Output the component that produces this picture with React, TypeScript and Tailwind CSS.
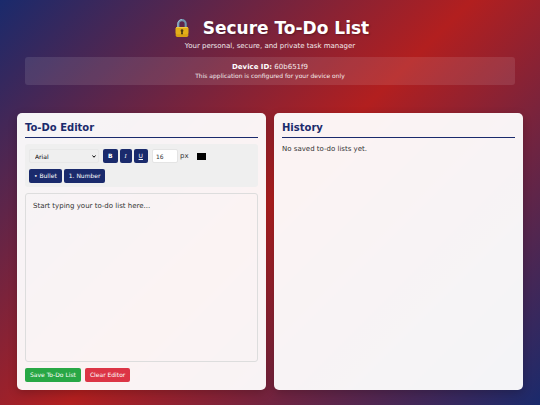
import { useState } from 'react';
import type { ReactNode } from 'react';
import clsx from 'clsx';

const fonts = ['Arial', 'Georgia', 'Verdana', 'Courier New'];

function LockIcon() {
  return (
    <svg viewBox="0 0 26 38" className="h-5 w-[14px]" aria-hidden="true">
      <path d="M6 19V11a7 7 0 0 1 14 0v8" fill="none" stroke="#6f94ad" strokeWidth="4" />
      <path d="M5 18V11a8 8 0 0 1 8-8" fill="none" stroke="#a9c9dc" strokeWidth="1.5" />
      <rect x="1" y="17" width="24" height="19" rx="3" fill="#d9a013" />
      <rect x="1" y="17" width="24" height="14" rx="3" fill="#e3ae1a" />
      <rect x="2" y="17" width="22" height="2" rx="1" fill="#f2cc40" />
      <circle cx="13" cy="24" r="2.6" fill="#4a3a12" />
      <path d="M11.8 25h2.4l.8 6h-4z" fill="#4a3a12" />
    </svg>
  );
}

function ToolButton({ label, className, children }: { label: string; className?: string; children: ReactNode }) {
  return (
    <button aria-label={label} className={clsx('h-[14px] rounded-[2px] bg-[#1a2a6c] px-[5px] text-[6px] leading-none text-white', className)}>
      {children}
    </button>
  );
}

function Panel({ title, children }: { title: string; children: ReactNode }) {
  return (
    <section className="flex min-w-0 flex-col rounded-[5px] bg-white/95 p-2 shadow-[0_3px_10px_rgba(0,0,0,0.2)]">
      <h2 className="mb-[6px] border-b border-[#1a2a6c] pt-px pb-[3px] text-[10px] leading-[12px] font-bold text-[#1a2a6c]">{title}</h2>
      {children}
    </section>
  );
}

export default function App() {
  const [text, setText] = useState('Start typing your to-do list here...');
  const [size, setSize] = useState('16');

  return (
    <div className="flex min-h-screen flex-col bg-[linear-gradient(135deg,#1a2a6c,#b21f1f,#1a2a6c)] px-[17px] pt-[17px] pb-[15px] font-['DejaVu_Sans',sans-serif] text-[7px] text-[#333]">
      <header className="mb-7 px-2 text-center text-white">
        <h1 className="flex items-center justify-center gap-[14px] pl-1 text-[17px] leading-[22px] font-bold [text-shadow:1px_1px_2px_rgba(0,0,0,0.3)]">
          <LockIcon />
          Secure To-Do List
        </h1>
        <p className="mt-[3px] text-[7px] leading-[9px] opacity-90">Your personal, secure, and private task manager</p>
        <div className="mt-[6px] rounded-[3px] bg-white/10 py-[6px]">
          <p className="text-[7px] leading-[9px]">
            <strong>Device ID:</strong> <span className="opacity-90">60b651f9</span>
          </p>
          <p className="text-[6px] leading-[7px] opacity-90">This application is configured for your device only</p>
        </div>
      </header>

      <main className="grid flex-1 grid-cols-2 gap-2">
        <Panel title="To-Do Editor">
          <div className="mb-[6px] flex flex-wrap items-center gap-x-[2px] gap-y-[6px] rounded-[3px] bg-[#efefef] px-1 pt-[5px] pb-1">
            <div className="relative mr-[2px]">
              <select aria-label="Font" className="block h-[14px] w-[70px] appearance-none rounded-[2px] border border-[#e8e8e8] bg-[#efefef] px-[5px] text-[6px] text-black">
                {fonts.map((font) => (
                  <option key={font}>{font}</option>
                ))}
              </select>
              <svg viewBox="0 0 8 6" className="pointer-events-none absolute top-[6px] right-[3px] h-[3px] w-1" aria-hidden="true">
                <path d="M1 1l3 3.5L7 1" fill="none" stroke="#000" strokeWidth="2" />
              </svg>
            </div>
            <ToolButton label="Bold" className="font-bold">B</ToolButton>
            <ToolButton label="Italic">
              <em className="font-['Liberation_Serif',serif]">I</em>
            </ToolButton>
            <ToolButton label="Underline" className="underline">U</ToolButton>
            <input
              aria-label="Font size"
              value={size}
              onChange={(e) => setSize(e.target.value)}
              className="ml-[2px] h-[14px] w-[26px] rounded-[2px] border border-[#e4e4e4] bg-white px-[3px] text-[6px]"
            />
            <span>px</span>
            <input type="color" aria-label="Text color" defaultValue="#000000" className="ml-[6px] h-[7px] w-[9px] [&::-webkit-color-swatch]:border-0 [&::-webkit-color-swatch-wrapper]:p-0" />
            <div className="flex w-full gap-[2px]">
              <ToolButton label="Bullet list">• Bullet</ToolButton>
              <ToolButton label="Numbered list">1. Number</ToolButton>
            </div>
          </div>
          <textarea
            aria-label="To-do list"
            value={text}
            onChange={(e) => setText(e.target.value)}
            className="flex-1 resize-none rounded-[3px] border border-[#ddd] px-[7px] py-[7px] text-[7px] leading-[11px]"
          />
          <div className="mt-[6px] flex gap-1">
            <button className="h-[14px] rounded-[2px] bg-[#28a745] px-[5px] text-[6px] leading-none text-white">Save To-Do List</button>
            <button className="h-[14px] rounded-[2px] bg-[#dc3545] px-[5px] text-[6px] leading-none text-white">Clear Editor</button>
          </div>
        </Panel>

        <Panel title="History">
          <p className="leading-[11px]">No saved to-do lists yet.</p>
        </Panel>
      </main>
    </div>
  );
}
